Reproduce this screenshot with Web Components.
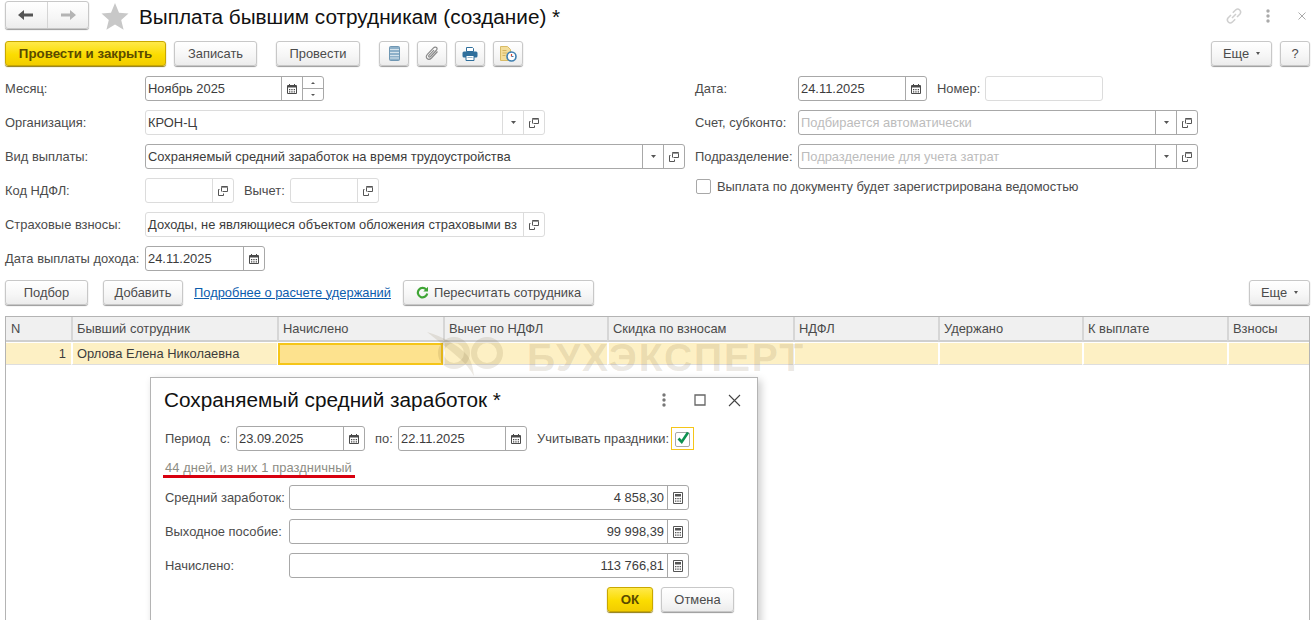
<!DOCTYPE html>
<html><head><meta charset="utf-8">
<style>
html,body{margin:0;padding:0;height:620px;overflow:hidden;background:#fff;}
body{font:12.9px "Liberation Sans",Arial,sans-serif;color:#4b4b4b;}
x-page{display:block;}
</style></head><body>
<x-page></x-page>
<script>
const ICONS={
cal:'<svg width="10" height="10" viewBox="0 0 10 10"><path d="M.5 1.500h9v8h-9z" fill="#fff" stroke="#4a4a4a"/><path d="M1 1h8v2.500H1z" fill="#4a4a4a"/><path d="M2.500 0v2M7.500 0v2" stroke="#4a4a4a"/><path d="M2 5h1.300v1.200H2zM4.300 5h1.300v1.200H4.300zM6.700 5H8v1.200H6.700zM2 7.200h1.300v1.200H2zM4.300 7.200h1.300v1.200H4.300zM6.700 7.200H8v1.200H6.700z" fill="#4a4a4a"/></svg>',
drop:'<svg width="5" height="3" viewBox="0 0 5 3"><path d="M0 0h5L2.500 3z" fill="#555"/></svg>',
open:'<svg width="10" height="10" viewBox="0 0 10 10" fill="none" stroke="#555"><path d="M3.500 5.500V.5h6v5h-5"/><path d="M3.500 1.500h6" stroke="#999"/><path d="M1.500 3.500h-1v6h5v-2"/></svg>',
calc:'<svg width="10" height="12" viewBox="0 0 10 12"><path d="M.5.500h9v11h-9z" fill="#fff" stroke="#555"/><path d="M2 2h6v2.500H2z" fill="#555"/><path d="M2 6h1.400v1.200H2zM4.300 6h1.400v1.200H4.300zM6.600 6H8v1.200H6.600zM2 8.500h1.400v1.200H2zM4.300 8.500h1.400v1.200H4.300zM6.600 8.500H8v1.200H6.600z" fill="#555"/></svg>',
list:'<svg width="11" height="15" viewBox="0 0 11 15"><rect x=".5" y=".5" width="10" height="14" rx="1" fill="#8db0c9" stroke="#6f97b3"/><path d="M1 3.500h9M1 6.500h9M1 9.500h9M1 12h9" stroke="#d5e3ec"/></svg>',
clip:'<svg width="14" height="15" viewBox="0 0 14 15" fill="none" stroke="#8a8a8a" stroke-width="1.200"><path d="M12.500 5.500 6.500 12c-1.400 1.400-3.300 1.600-4.400.5S1 9.700 2.400 8.300L8.500 1.900c1-1 2.300-1.100 3-.4s.6 2-.4 3L5.500 10.500c-.6.600-1.200.7-1.600.3s-.3-1 .3-1.600L9 4.200"/></svg>',
print:'<svg width="16" height="14" viewBox="0 0 16 14"><path d="M4.500.5h6l1 1v3h-7z" fill="#fff" stroke="#2f6f9c"/><rect x=".5" y="4.500" width="15" height="6" rx="1.500" fill="#2f6f9c"/><path d="M4 8.500h8v5H4z" fill="#fff" stroke="#2f6f9c"/><path d="M5.500 10.500h5" stroke="#9ab8cc"/></svg>',
hist:'<svg width="17" height="16" viewBox="0 0 17 16"><path d="M.5.500h7l3 3v11H.5z" fill="#f3dd9a" stroke="#d8bb66"/><path d="M2.500 4.500h4M2.500 7h5M2.500 9.500h3" stroke="#d3b462"/><circle cx="11.500" cy="10.500" r="4.500" fill="#fff" stroke="#3f7fb0" stroke-width="1.600"/><path d="M11.500 8v2.500" stroke="#d0473a" stroke-width="1.200"/><path d="M11.500 10.500h2" stroke="#3f7fb0"/></svg>',
refresh:'<svg width="13" height="13" viewBox="0 0 13 13" fill="none"><path d="M10.300 3.800A4.700 4.700 0 1 0 11.200 7.500" stroke="#3fa535" stroke-width="2.200"/><path d="M12 .8v4.700H7.300z" fill="#3fa535"/></svg>',
};
function icon(n){return ICONS[n]||'';}
function def(name,css,render){
 customElements.define(name,class extends HTMLElement{
  connectedCallback(){
   if(this.shadowRoot)return;
   const r=this.attachShadow({mode:'open'});
   r.innerHTML='<style>'+css+'</style>'+render(this);
  }
 });
}
const FONT='"Liberation Sans",Arial,sans-serif';
const bg='linear-gradient(#fff,#f6f6f6 60%,#ececec)';
def('x-btn',`
:host{display:inline-flex;flex:none}
.b{box-sizing:border-box;height:25px;width:100%;display:flex;align-items:center;justify-content:center;gap:5px;border:1px solid #c8c8c8;border-radius:3px;background:${bg};box-shadow:0 1px 1px #9a9a9a;color:#4b4b4b;font:12.9px ${FONT};white-space:nowrap;padding:0}
:host([primary]) .b{background:linear-gradient(#ffe94a,#fbdc00 55%,#f2cd00);border-color:#c9a800;box-shadow:0 1px 1px #8f7a10;color:#5a4a00;font:bold 13.300px ${FONT}}
:host([caret]) .b{gap:7px}
:host([caret]) .b::after{content:"";border:2.500px solid transparent;border-top:3px solid #555;border-bottom:0}
`,t=>`<div class="b">${t.getAttribute('icon')?icon(t.getAttribute('icon')):''}<slot></slot></div>`);
def('x-field',`
:host{display:inline-flex;flex:none}
.f{box-sizing:border-box;height:25px;width:100%;display:flex;border:1px solid #a8a8a8;border-radius:3px;background:#fff;overflow:hidden}
:host([light]) .f{border-color:#dcdcdc}
.v{flex:1;min-width:0;padding:0 2px;color:#3c3c3c;white-space:nowrap;overflow:hidden;font:12.9px/23px ${FONT}}
:host([right]) .v{text-align:right;padding-right:3px}
.v.ph{color:#bcbcbc}
.a{flex:none;width:20px;border-left:1px solid #a8a8a8;display:flex;align-items:center;justify-content:center}
:host([light]) .a{border-left-color:#dcdcdc}
.spin{flex:none;width:20px;border-left:1px solid #a8a8a8;display:flex;flex-direction:column}
.spin i{flex:1;display:flex;align-items:center;justify-content:center}
.spin i+i{border-top:1px solid #a8a8a8}
.up{width:0;height:0;border:2px solid transparent;border-bottom:2px solid #555;border-top:0}
.dn{width:0;height:0;border:2px solid transparent;border-top:2px solid #555;border-bottom:0}
`,t=>{
 const btn=(t.getAttribute('btn')||'').split(' ').filter(Boolean);
 const ph=t.getAttribute('ph');
 return `<div class="f"><div class="v ${ph?'ph':''}">${t.getAttribute('value')||ph||''}</div>`+
 btn.map(b=>b==='spin'?'<div class="spin"><i><b class="up"></b></i><i><b class="dn"></b></i></div>':`<div class="a">${icon(b)}</div>`).join('')+'</div>';
});
def('x-row',`
:host{display:flex;align-items:center;height:25px;margin-bottom:9px}
.l{flex:none;white-space:nowrap;color:#4b4b4b}
`,t=>`<div class="l" style="width:${t.getAttribute('lw')||140}px">${t.getAttribute('label')||''}</div><slot></slot>`);
def('x-lab',`:host{display:inline-block;flex:none;white-space:nowrap;color:#4b4b4b}`,()=>'<slot></slot>');
def('x-check',`
:host{display:inline-flex;align-items:center;gap:6px;color:#4b4b4b;white-space:nowrap}
.c{box-sizing:border-box;width:15px;height:15px;border:1px solid #a8a8a8;border-radius:2px;background:#fff;display:block}
`,()=>'<span class="c"></span><slot></slot>');
def('x-tick',`
:host{display:flex;flex:none;box-sizing:border-box;width:23px;height:23px;border:1px solid #f5c518;align-items:center;justify-content:center}
svg{display:block}
`,()=>'<svg width="17" height="17" viewBox="0 0 17 17"><rect x="1.500" y="2.500" width="14" height="14" rx="1.500" fill="#fff" stroke="#a8a8a8"/><path d="M4.500 8.500l3.200 3.500L14 2.500" fill="none" stroke="#0f9250" stroke-width="2.600"/></svg>');
def('x-note',`
:host{display:block;box-sizing:border-box;width:192px;height:18px;margin:0 0 7px -1px;padding-left:2px;border-bottom:3px solid #d8000f;color:#8d8d84;line-height:15px;white-space:nowrap;letter-spacing:.07px}
`,()=>'<slot></slot>');
def('x-table',`
:host{display:block;box-sizing:border-box;margin:0 6px 0 5px;height:304px;border:1px solid #b4b4b4;border-bottom:0;position:relative;overflow:hidden}
.g{display:grid;grid-template-columns:65px 206px 166px 164px 186px 145px 144px 145px 1fr}
.h{box-sizing:border-box;height:25px;background:#f0f0f0;border-left:2px solid #d6d6d6;border-bottom:2px solid #cfcfcf;padding:0 0 0 4px;line-height:23px;white-space:nowrap;color:#4b4b4b}
.h:first-child{border-left:0;padding-left:5px}
.gap{grid-column:1/-1;height:1px;background:#fff}
.c{box-sizing:border-box;height:22px;background:#fdf0c4;border-left:2px solid #fff;border-bottom:1px solid #dedede;padding:0 4px;line-height:21px;color:#3c3c3c;white-space:nowrap}
.c.first{border-left:0;padding:0 5px}
.c.cur{background:#fde28e;border:2px solid #f5c518;margin-left:1px}
.r{text-align:right}
.wm{position:absolute;left:421px;top:12px;width:380px;height:48px;pointer-events:none;display:flex}
.wm svg{flex:none}
.wm span{margin:9px 0 0 20px;color:rgba(110,85,40,.14);font:bold 39px/1 ${FONT};letter-spacing:1.900px;white-space:nowrap}
`,()=>{
 const hs=['N','Бывший сотрудник','Начислено','Вычет по НДФЛ','Скидка по взносам','НДФЛ','Удержано','К выплате','Взносы'];
 return `<div class="g">${hs.map(h=>`<div class="h">${h}</div>`).join('')}<div class="gap"></div>
 <div class="c r first">1</div><div class="c">Орлова Елена Николаевна</div><div class="c cur"></div>${'<div class="c"></div>'.repeat(6)}</div>
 <div class="wm"><svg width="80" height="48" viewBox="0 0 80 48" fill="none"><path d="M0 3C14 7 30 15 40 26c4 5 6 12 7 21-4-7-9-13-15-18C22 20 10 11 0 3z" fill="rgba(110,85,40,.13)"/><g stroke="rgba(110,85,40,.13)" stroke-width="6"><circle cx="27" cy="24" r="13"/><circle cx="60" cy="24" r="13"/></g></svg><span>БУХЭКСПЕРТ</span></div>`;
});
def('x-dialog',`
:host{position:absolute;left:150px;top:377px;width:608px;height:260px;box-sizing:border-box;background:#fff;border:1px solid #b4b4b4;box-shadow:3px 3px 8px rgba(0,0,0,.2);display:block;padding:0 0 0 13px;overflow:hidden}
.t{display:flex;align-items:center;height:48px;padding:0 16px 4px 0;box-sizing:border-box}
.t h2{flex:1;margin:0;font:normal 20.750px ${FONT};color:#111}
.t svg{display:block;flex:none}
`,t=>`<div class="t"><h2>${t.getAttribute('title')}</h2>
<svg width="4" height="14" viewBox="0 0 4 14" style="margin-right:28px"><circle cx="2" cy="2" r="1.700" fill="#777"/><circle cx="2" cy="7" r="1.700" fill="#777"/><circle cx="2" cy="12" r="1.700" fill="#777"/></svg>
<svg width="12" height="12" viewBox="0 0 12 12" fill="none" stroke="#666" stroke-width="1.300" style="margin-right:22px"><path d="M1 1h10v10H1z"/></svg>
<svg width="13" height="13" viewBox="0 0 13 13" fill="none" stroke="#444" stroke-width="1.100"><path d="M1 1l11 11M12 1L1 12"/></svg></div><slot></slot>`);
def('x-page',`
:host{display:block;position:relative;height:620px;overflow:hidden}
.top{display:flex;align-items:center;height:33px;padding:0 10px 0 5px}
.nav{box-sizing:border-box;width:84px;height:28px;margin-top:-3px;display:flex;border:1px solid #c8c8c8;border-radius:3px;background:${bg};box-shadow:0 1px 1px #9a9a9a}
.nav div{flex:1;display:flex;align-items:center;justify-content:center}
.nav div+div{border-left:1px solid #d5d5d5}
.title{font:20.750px ${FONT};color:#111;margin-left:10px;flex:1;white-space:nowrap}
.star{margin-left:12px}
.tr{display:flex;align-items:center;margin-top:-2px}
.cmd{display:flex;align-items:center;height:25px;padding:8px 6px 10px 5px}
.sp{flex:1}
.cols{display:flex;padding-left:5px}
.left{width:690px}
.btns{display:flex;align-items:center;padding:0 6px 0 5px;height:26px;margin:-1px 0 11px}
a{color:#0b5cad;text-decoration:underline;white-space:nowrap}
.d-lab{margin-left:1px}
.foot{display:flex;padding-left:443px;gap:8px}
`,()=>`
<div class="top">
 <div class="nav"><div><svg width="16" height="10" viewBox="0 0 16 10"><path d="M6 0v3.500h9v3H6V10L0 5z" fill="#555"/></svg></div><div><svg width="16" height="10" viewBox="0 0 16 10"><path d="M10 0v3.500H1v3h9V10l6-5z" fill="#b4b4b4"/></svg></div></div>
 <svg class="star" width="28" height="27" viewBox="0 0 28 27"><path d="M14 0l4 9.800 9.500.7-7.300 6.500 2.400 9.800L14 21.500 5.400 26.800l2.400-9.800L.5 10.500 10 9.800z" fill="#c8c8c8"/></svg>
 <div class="title">Выплата бывшим сотрудникам (создание) *</div>
 <div class="tr">
  <svg width="18" height="18" viewBox="0 0 18 18" fill="none" stroke="#cfcfcf" stroke-width="1.500" style="margin-right:23px"><path d="M7 11l4-4M6 8l-3 3a3 3 0 0 0 4.200 4.200l3-3M12 10l3-3a3 3 0 0 0-4.200-4.200l-3 3"/></svg>
  <svg width="4" height="14" viewBox="0 0 4 14" style="margin-right:28px"><circle cx="2" cy="2" r="1.700" fill="#aaa"/><circle cx="2" cy="7" r="1.700" fill="#aaa"/><circle cx="2" cy="12" r="1.700" fill="#aaa"/></svg>
  <svg width="8" height="8" viewBox="0 0 8 8" fill="none" stroke="#aaa"><path d="M.5.500l7 7M7.500.500l-7 7"/></svg>
 </div>
</div>
<div class="cmd">
 <x-btn primary style="width:161px">Провести и закрыть</x-btn>
 <x-btn style="width:83px;margin-left:8px">Записать</x-btn>
 <x-btn style="width:84px;margin-left:19px">Провести</x-btn>
 <x-btn icon="list" style="width:30px;margin-left:19px"></x-btn>
 <x-btn icon="clip" style="width:30px;margin-left:8px"></x-btn>
 <x-btn icon="print" style="width:30px;margin-left:8px"></x-btn>
 <x-btn icon="hist" style="width:30px;margin-left:8px"></x-btn>
 <span class="sp"></span>
 <x-btn caret style="width:61px">Еще</x-btn>
 <x-btn style="width:30px;margin-left:8px;font-weight:bold">?</x-btn>
</div>
<div class="cols">
 <div class="left">
  <x-row label="Месяц:"><x-field value="Ноябрь 2025" btn="cal spin" style="width:179px"></x-field></x-row>
  <x-row label="Организация:"><x-field light value="КРОН-Ц" btn="drop open" style="width:400px"></x-field></x-row>
  <x-row label="Вид выплаты:"><x-field value="Сохраняемый средний заработок на время трудоустройства" btn="drop open" style="width:540px"></x-field></x-row>
  <x-row label="Код НДФЛ:"><x-field light btn="open" style="width:89px"></x-field><x-lab style="margin-left:10px;width:46px">Вычет:</x-lab><x-field light btn="open" style="width:89px"></x-field></x-row>
  <x-row label="Страховые взносы:"><x-field light value="Доходы, не являющиеся объектом обложения страховыми вз" btn="open" style="width:400px"></x-field></x-row>
  <x-row label="Дата выплаты дохода:"><x-field value="24.11.2025" btn="cal" style="width:120px"></x-field></x-row>
 </div>
 <div>
  <x-row lw="103" label="Дата:"><x-field value="24.11.2025" btn="cal" style="width:129px"></x-field><x-lab style="margin-left:10px;width:48px">Номер:</x-lab><x-field light style="width:118px"></x-field></x-row>
  <x-row lw="103" label="Счет, субконто:"><x-field ph="Подбирается автоматически" btn="drop open" style="width:400px"></x-field></x-row>
  <x-row lw="103" label="Подразделение:"><x-field ph="Подразделение для учета затрат" btn="drop open" style="width:400px"></x-field></x-row>
  <x-row lw="0"><x-check style="margin:-8px 0 0 1px">Выплата по документу будет зарегистрирована ведомостью</x-check></x-row>
 </div>
</div>
<div class="btns">
 <x-btn style="width:83px">Подбор</x-btn>
 <x-btn style="width:80px;margin-left:15px">Добавить</x-btn>
 <a href="#" style="margin-left:11px">Подробнее о расчете удержаний</a>
 <x-btn icon="refresh" style="width:191px;margin-left:12px">Пересчитать сотрудника</x-btn>
 <span class="sp"></span>
 <x-btn caret style="width:61px">Еще</x-btn>
</div>
<x-table></x-table>
<x-dialog title="Сохраняемый средний заработок *">
 <x-row lw="0">
  <x-lab class="d-lab" style="width:55px">Период</x-lab><x-lab style="width:16px">с:</x-lab>
  <x-field value="23.09.2025" btn="cal" style="width:129px"></x-field>
  <x-lab style="margin-left:10px;width:23px">по:</x-lab>
  <x-field value="22.11.2025" btn="cal" style="width:129px"></x-field>
  <x-lab style="margin-left:10px;width:134px">Учитывать праздники:</x-lab>
  <x-tick></x-tick>
 </x-row>
 <x-note>44 дней, из них 1 праздничный</x-note>
 <x-row lw="0"><x-lab class="d-lab" style="width:124px">Средний заработок:</x-lab><x-field right value="4 858,30" btn="calc" style="width:400px"></x-field></x-row>
 <x-row lw="0"><x-lab class="d-lab" style="width:124px">Выходное пособие:</x-lab><x-field right value="99 998,39" btn="calc" style="width:400px"></x-field></x-row>
 <x-row lw="0"><x-lab class="d-lab" style="width:124px">Начислено:</x-lab><x-field right value="113 766,81" btn="calc" style="width:400px"></x-field></x-row>
 <div class="foot"><x-btn primary style="width:46px">ОК</x-btn><x-btn style="width:73px">Отмена</x-btn></div>
</x-dialog>
`);
</script>
</body></html>
